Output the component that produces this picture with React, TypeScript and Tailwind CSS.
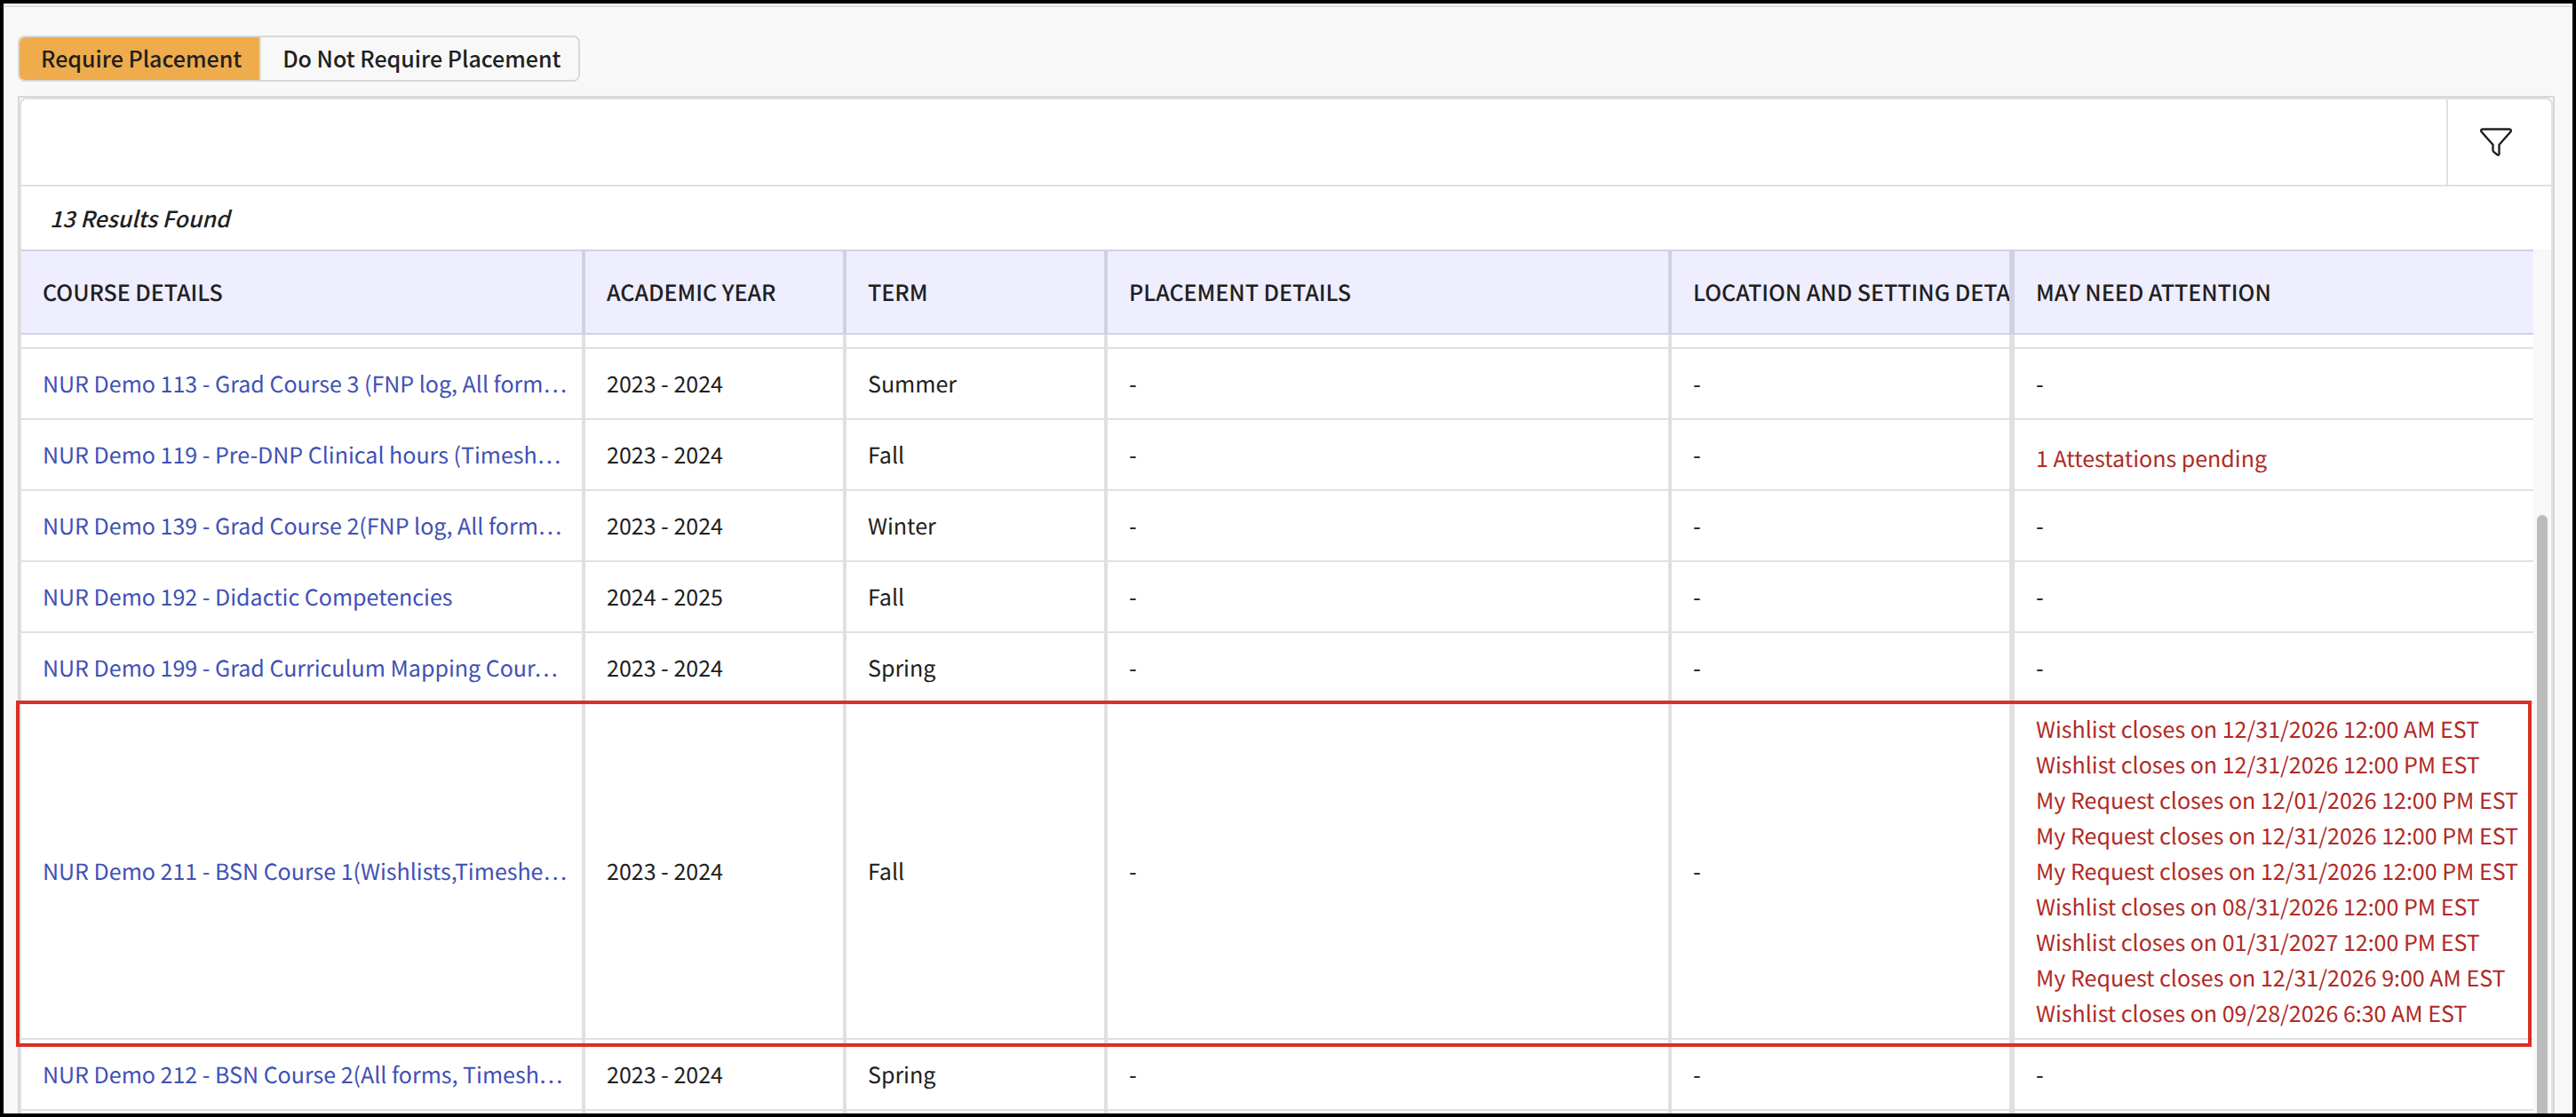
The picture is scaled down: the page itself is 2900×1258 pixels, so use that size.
import { useState } from "react";

type Course = {
  name: string;
  year: string;
  term: string;
  alerts?: string[];
};

const tabs = ["Require Placement", "Do Not Require Placement"];

const columns = [
  { label: "Course Details", width: "w-[635px]", border: "border-r-4" },
  { label: "Academic Year", width: "w-[294px]", border: "border-r-4" },
  { label: "Term", width: "w-[294px]", border: "border-r-4" },
  { label: "Placement Details", width: "w-[635px]", border: "border-r-4" },
  { label: "Location and Setting Details", width: "w-[386px]", border: "border-r-6" },
  { label: "May Need Attention", width: "", border: "" },
];

const courses: Course[] = [
  { name: "NUR Demo 113 - Grad Course 3 (FNP log, All form…", year: "2023 - 2024", term: "Summer" },
  {
    name: "NUR Demo 119 - Pre-DNP Clinical hours (Timesh…",
    year: "2023 - 2024",
    term: "Fall",
    alerts: ["1 Attestations pending"],
  },
  { name: "NUR Demo 139 - Grad Course 2(FNP log, All form…", year: "2023 - 2024", term: "Winter" },
  { name: "NUR Demo 192 - Didactic Competencies", year: "2024 - 2025", term: "Fall" },
  { name: "NUR Demo 199 - Grad Curriculum Mapping Cour…", year: "2023 - 2024", term: "Spring" },
  {
    name: "NUR Demo 211 - BSN Course 1(Wishlists,Timeshe…",
    year: "2023 - 2024",
    term: "Fall",
    alerts: [
      "Wishlist closes on 12/31/2026 12:00 AM EST",
      "Wishlist closes on 12/31/2026 12:00 PM EST",
      "My Request closes on 12/01/2026 12:00 PM EST",
      "My Request closes on 12/31/2026 12:00 PM EST",
      "My Request closes on 12/31/2026 12:00 PM EST",
      "Wishlist closes on 08/31/2026 12:00 PM EST",
      "Wishlist closes on 01/31/2027 12:00 PM EST",
      "My Request closes on 12/31/2026 9:00 AM EST",
      "Wishlist closes on 09/28/2026 6:30 AM EST",
    ],
  },
  { name: "NUR Demo 212 - BSN Course 2(All forms, Timesh…", year: "2023 - 2024", term: "Spring" },
];

function FilterIcon() {
  return (
    <svg viewBox="0 0 36 32" className="h-8 w-9" fill="none" stroke="#202020" strokeWidth="2.4" strokeLinejoin="round">
      <path d="M3 1.5H33C34.8 1.5 35.4 3.2 34.3 4.5L21.5 19V29C21.5 30.6 20.6 31 19.4 30.2L15.8 27.4C15 26.8 14.5 26.2 14.5 25.2V19L1.7 4.5C0.6 3.2 1.2 1.5 3 1.5Z" />
    </svg>
  );
}

// slice of the row that is scrolled past the edge of the table
function PartialRow({ height }: { height: string }) {
  return (
    <tr className={height}>
      {columns.map((c) => (
        <td key={c.label} className={`border-b-2 border-[#e0e0e0] p-0 ${c.border}`} />
      ))}
    </tr>
  );
}

function CourseRow({ course }: { course: Course }) {
  const alerts = course.alerts ?? [];
  const highlighted = alerts.length > 1;
  const cell = "h-20 overflow-hidden border-b-2 border-[#e0e0e0] px-6 py-0 whitespace-nowrap";

  return (
    <tr className={highlighted ? "relative" : ""}>
      <td className={`${cell} border-r-4`}>
        <a href="#" className="text-[#3f51b5]">
          {course.name}
        </a>
        {highlighted && (
          <div className="pointer-events-none absolute -top-1 right-0.5 -bottom-2 -left-1.5 border-4 border-[#d93025]" />
        )}
      </td>
      <td className={`${cell} border-r-4`}>{course.year}</td>
      <td className={`${cell} border-r-4`}>{course.term}</td>
      <td className={`${cell} border-r-4`}>-</td>
      <td className={`${cell} border-r-6`}>-</td>
      <td className={cell}>
        {alerts.length === 0 ? (
          "-"
        ) : (
          <ul className={`text-[#b02a25] leading-10 ${highlighted ? "py-2" : "pt-2"}`}>
            {alerts.map((a, idx) => (
              <li key={idx}>{a}</li>
            ))}
          </ul>
        )}
      </td>
    </tr>
  );
}

export default function App() {
  const [active, setActive] = useState(0);

  return (
    <div className="flex h-screen flex-col overflow-hidden border-4 border-black bg-white pt-0.5 font-['Noto_Sans_CJK_KR','Noto_Sans_CJK_SC',sans-serif] text-[25px] leading-[34px] text-[#202020] [text-rendering:geometricPrecision]">
      <main className="flex min-h-0 flex-1 flex-col border-t-2 border-[#e0e0e0] bg-[#f8f8f8] pt-8 pr-5 pl-4">
        <div className="flex self-start overflow-hidden rounded-lg border-2 border-[#d8d8d8]">
          {tabs.map((tab, idx) => (
            <button
              key={tab}
              type="button"
              onClick={() => setActive(idx)}
              className={`h-12 pr-5 pb-0.5 pl-6 font-medium ${idx > 0 ? "border-l-2 border-[#e0e0e0]" : ""} ${
                active === idx ? "bg-[#eeac4d]" : "bg-[#f8f8f8]"
              }`}
            >
              {tab}
            </button>
          ))}
        </div>

        <section className="mt-4 flex min-h-0 flex-1 flex-col border-2 border-b-0 border-[#d8d8d8]">
          <div className="flex min-h-0 flex-1 flex-col rounded-t-lg border-2 border-b-0 border-[#e0e0e0] bg-white">
            <div className="flex h-[98px] shrink-0 justify-end border-b-2 border-[#e0e0e0]">
              <button
                type="button"
                aria-label="Filter"
                className="flex w-[118px] items-center justify-center border-l-2 border-[#e0e0e0] pr-2"
              >
                <FilterIcon />
              </button>
            </div>
            <p className="flex h-[71px] shrink-0 items-center px-8 font-medium italic">13 Results Found</p>

            <div className="flex min-h-0 flex-1">
              <div className="min-w-0 flex-1">
                <table className="w-full table-fixed border-separate border-spacing-0">
                  <thead>
                    <tr>
                      {columns.map((c) => (
                        <th
                          key={c.label}
                          scope="col"
                          className={`h-24 overflow-hidden border-y-2 border-[#d2d1e1] bg-[#efeefe] py-0 pl-6 text-left font-medium whitespace-nowrap uppercase ${c.width} ${c.border}`}
                        >
                          {c.label}
                        </th>
                      ))}
                    </tr>
                  </thead>
                  <tbody>
                    <PartialRow height="h-4" />
                    {courses.map((course) => (
                      <CourseRow key={course.name} course={course} />
                    ))}
                    <PartialRow height="h-20" />
                  </tbody>
                </table>
              </div>
              <div className="flex w-5 justify-center bg-[#f8f8f8] pt-[299px]">
                <div className="w-3 rounded-t-full bg-[#bbbbbb]" />
              </div>
            </div>
          </div>
        </section>
      </main>
    </div>
  );
}
